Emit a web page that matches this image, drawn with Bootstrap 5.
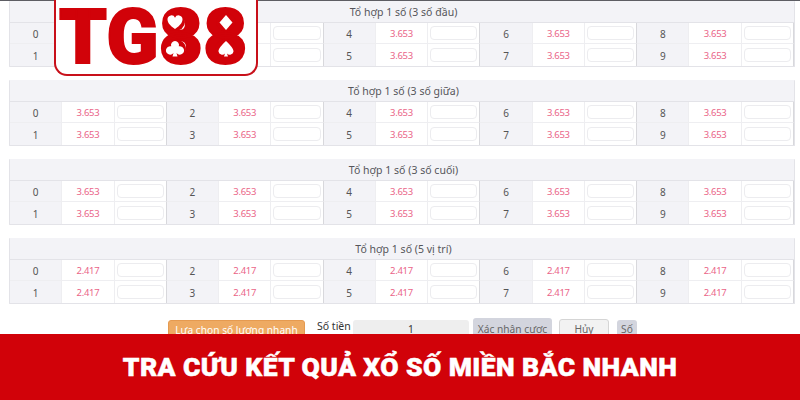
<!doctype html>
<html lang="vi"><head><meta charset="utf-8">
<link href="https://cdn.jsdelivr.net/npm/bootstrap@5.3.0/dist/css/bootstrap.min.css" rel="stylesheet">
<style>
html,body{margin:0;height:400px;overflow:hidden;background:#fff}
body{font-family:"Noto Sans","Open Sans",sans-serif;position:relative}
.sheet{border-top:1px solid #5d5d63;padding:0 5px 0 9px;display:flex;flex-direction:column;gap:13.5px}
.odds-panel{border:1px solid #e3e3e8;border-top:0;border-radius:1px}
.panel-head{height:21.5px;background:#f3f3f7;color:#55555a;font-size:10.5px;display:flex;align-items:center;justify-content:center;border-bottom:1px solid #e3e3e8;padding:4px 0 0 3px;letter-spacing:.02px}
.panel-grid{display:grid;grid-template-columns:repeat(15,1fr);font-size:10px}
.panel-grid>div{height:21.5px;display:flex;align-items:center;justify-content:center;border-right:1px solid #eeeef1;border-bottom:1px solid #eeeef1}
.cell-num{background:#f3f3f7;color:#555;padding-top:3px}
.cell-odd{background:#fff;color:#ea6488;font-size:9.5px;letter-spacing:-.3px;padding-top:3px}
.cell-in{background:#fff;padding:0 2px}
.cell-in.sep{border-right:1px solid #d8d8dc!important}
.cell-in i{display:block;width:100%;height:14.5px;border:1px solid #ececef;border-radius:4px}
.panel-grid>div:nth-last-child(-n+15){border-bottom:0}
.action-row{display:flex;position:absolute;top:318px;left:168px;align-items:flex-start;font-size:10.2px}
.act{height:24px;border-radius:3px;display:flex;align-items:flex-start;justify-content:center;padding-top:3px}
.act-quick{width:137px;background:#eeaa62;color:#fff;border:1px solid #e59a50;margin-top:2px;padding-top:2px}
.act-lbl{width:48px;color:#333;padding:1px 0 0 12px;font-size:10.5px}
.act-money{width:116px;background:#eeeeee;color:#333;margin:2px 4px 0 0;padding-top:2px}
.act-ok{width:79px;background:#d3d5de;color:#666;margin-right:7px;padding-top:4px}
.act-no{width:50px;background:#f2f2f2;color:#666;border:1px solid #d5d5d5;margin:1px 8px 0 0;padding-top:2px}
.act-so{width:20px;background:#d3d5de;color:#666;margin-top:2px;padding-top:2px}
.ribbon{position:absolute;left:0;right:0;top:334px;height:66px;background:#d10209;color:#fff;display:flex;align-items:center;justify-content:center;font-family:"Roboto","Noto Sans",sans-serif;font-weight:900;font-size:26.5px;letter-spacing:.4px;-webkit-text-stroke:.5px #fff}
.brand{position:absolute;left:54px;top:-8px;width:204px;height:84px;background:#fff;border:2px solid #c8101a;border-radius:0 0 13px 13px;border-top:0}
.brand-txt{position:absolute;left:3px;top:15px;color:#d10209;font-family:"Roboto",sans-serif;font-weight:900;font-size:76px;line-height:60px;letter-spacing:.5px;-webkit-text-stroke:2px #d10209;white-space:nowrap}
.brand svg{position:absolute;left:0;top:0}
</style></head><body>
<main class="sheet" id="s"></main>
<div class="brand"><span class="brand-txt">TG88</span>
<svg width="200" height="84" viewBox="56 -8 200 84">
<g fill="#d10209"><ellipse cx="175" cy="22" rx="10" ry="9"/><ellipse cx="175" cy="49" rx="11" ry="10"/><ellipse cx="226" cy="22" rx="10" ry="9"/><ellipse cx="226" cy="49" rx="11" ry="10"/></g>
<g fill="#fff">
<path d="M175 29c-6-4-7.5-7-7.5-10a3.9 3.9 0 0 1 7.500-1.200 3.900 3.900 0 0 1 7.500 1.200c0 3-1.500 6-7.500 10z"/>
<path d="M175 41a4 4 0 0 1 3.800 5.300 4.200 4.200 0 1 1-2.300 6.700l1 3.500h-5l1-3.500a4.200 4.200 0 1 1-2.300-6.700 4 4 0 0 1 3.800-5.300z"/>
<path d="M226 15l6.500 7.500-6.500 7.500-6.500-7.500z"/>
<path d="M226 41c4.500 4.500 7.500 7.500 7.500 10.500a3.800 3.800 0 0 1-6.500 2l1 3h-4l1-3a3.800 3.800 0 0 1-6.500-2c0-3 3-6 7.500-10.500z"/>
</g></svg></div>
<div class="action-row">
<div class="act act-quick">Lựa chọn số lượng nhanh</div>
<div class="act-lbl">Số tiền</div>
<div class="act act-money">1</div>
<div class="act act-ok">Xác nhận cược</div>
<div class="act act-no">Hủy</div>
<div class="act act-so">Số</div>
</div>
<div class="ribbon">TRA CỨU KẾT QUẢ XỔ SỐ MIỀN BẮC NHANH</div>
<script>
var P=[["Tổ hợp 1 số (3 số đầu)","3.653"],["Tổ hợp 1 số (3 số giữa)","3.653"],["Tổ hợp 1 số (3 số cuối)","3.653"],["Tổ hợp 1 số (5 vị trí)","2.417"]];
var h="";P.forEach(function(p){var g="";[0,1].forEach(function(r){[0,2,4,6,8].forEach(function(n){g+='<div class="cell-num">'+(n+r)+'</div><div class="cell-odd">'+p[1]+'</div><div class="cell-in sep"><i></i></div>';});});
h+='<section class="odds-panel"><div class="panel-head">'+p[0]+'</div><div class="panel-grid">'+g+'</div></section>';});
document.getElementById("s").innerHTML=h;
</script>
<script src="https://cdn.jsdelivr.net/npm/bootstrap@5.3.0/dist/js/bootstrap.bundle.min.js"></script>
</body></html>
